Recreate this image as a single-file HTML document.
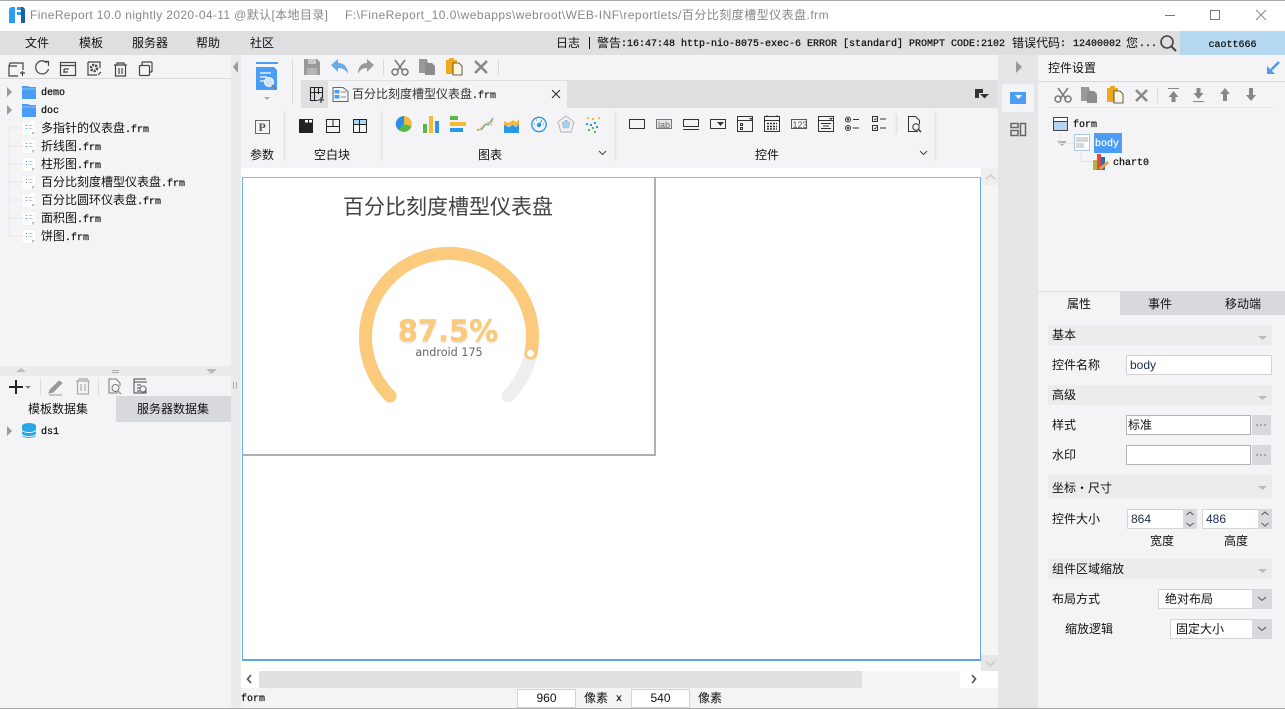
<!DOCTYPE html>
<html lang="zh"><head><meta charset="utf-8"><title>FineReport</title>
<style>
html,body{margin:0;padding:0;width:1285px;height:709px;overflow:hidden;background:#f4f4f7}
body{position:relative;font:12px/16px "Liberation Sans","Noto Sans CJK SC",sans-serif;color:#111}
.b{position:absolute}
.t{position:absolute;white-space:nowrap;line-height:16px;font-size:12px}
.m{font-family:"Liberation Mono","Noto Sans CJK SC",monospace;font-size:10px;-webkit-text-stroke:.25px #111}
.sec{position:absolute;left:1048px;width:224px;background:#ececed}
.in{position:absolute;background:#fff;border:1px solid #d4d4d6;box-sizing:border-box}
.in2{position:absolute;background:#fff;border:1px solid #b4b4b4;box-sizing:border-box}
.btn{position:absolute;background:#d8d9dc}
svg{position:absolute;left:0;top:0}
</style></head><body>
<!-- regions -->
<div class="b" style="left:0;top:0;width:1285px;height:31px;background:#fff"></div>
<div class="b" style="left:0;top:31px;width:1285px;height:24px;background:#dfdfe1"></div>
<div class="b" style="left:1180px;top:31px;width:105px;height:24px;background:#b5d9f0"></div>
<div class="b" style="left:0;top:55px;width:231px;height:654px;background:#f4f4f7"></div>
<div class="b" style="left:231px;top:55px;width:10px;height:654px;background:#ebebed"></div>
<div class="b" style="left:0;top:78px;width:231px;height:1px;background:#d8d8da"></div>
<div class="b" style="left:0;top:366px;width:231px;height:10px;background:#ebebed"></div>
<div class="b" style="left:116px;top:396px;width:115px;height:26px;background:#d8d9dc"></div>
<div class="b" style="left:241px;top:55px;width:757px;height:113px;background:#f4f4f7"></div>
<div class="b" style="left:301px;top:80px;width:697px;height:28px;background:#dfdfe1"></div>
<div class="b" style="left:328px;top:81px;width:239px;height:27px;background:#f4f4f7"></div>
<div class="b" style="left:241px;top:168px;width:757px;height:520px;background:#fff"></div>
<div class="b" style="left:981px;top:168px;width:17px;height:503px;background:#f5f5f3"></div>
<div class="b" style="left:981px;top:168px;width:17px;height:17px;background:#eeeeee"></div>
<div class="b" style="left:981px;top:655px;width:17px;height:16px;background:#e6e6e6"></div>
<div class="b" style="left:259px;top:671px;width:603px;height:17px;background:#e0e0e0"></div>
<div class="b" style="left:862px;top:671px;width:98px;height:17px;background:#f5f5f3"></div>
<div class="b" style="left:241px;top:688px;width:757px;height:21px;background:#f4f4f7"></div>
<div class="b" style="left:998px;top:55px;width:40px;height:654px;background:#e6e6e8"></div>
<div class="b" style="left:1002px;top:84px;width:32px;height:28px;background:#f4f4f7"></div>
<div class="b" style="left:1010px;top:92px;width:16px;height:12px;background:#4a9cf5"></div>
<div class="b" style="left:1038px;top:55px;width:247px;height:654px;background:#f4f4f7"></div>
<div class="b" style="left:1038px;top:81px;width:247px;height:1px;background:#d8d8da"></div>
<div class="b" style="left:1048px;top:107px;width:226px;height:1px;background:#e4e4e6"></div>
<div class="b" style="left:1120px;top:291px;width:165px;height:24px;background:#d8d9dc"></div>
<div class="b" style="left:1038px;top:291px;width:82px;height:1px;background:#e0e0e2"></div>
<!-- canvas -->
<div class="b" style="left:242px;top:177px;width:414px;height:279px;box-sizing:border-box;border-right:2px solid #b0b0b0;border-bottom:2px solid #b0b0b0"></div>
<div class="b" style="left:242px;top:177px;width:739px;height:484px;box-sizing:border-box;border-left:1.500px solid #6aa8ec;border-right:1px solid #6aa8ec;border-bottom:2px solid #5aa2f0;border-top:1.500px solid #8dbbe8"></div>
<div class="t" style="left:343px;top:196px;font-size:21px;line-height:24px;color:#444">百分比刻度槽型仪表盘</div>
<div class="t" style="left:348px;width:200px;text-align:center;top:313px;font:bold 29px/36px 'DejaVu Sans',sans-serif;color:#fbca7d;-webkit-text-stroke:.4px #fbca7d;text-shadow:0 2px 1px #e8e8e8">87.5%</div>
<div class="t" style="left:349px;width:200px;text-align:center;top:345px;font:11.200px/16px 'DejaVu Sans',sans-serif;color:#666">android 175</div>
<!-- sections -->
<div class="sec" style="top:325px;height:20px"></div>
<div class="sec" style="top:385px;height:20px"></div>
<div class="sec" style="top:475px;height:23px"></div>
<div class="sec" style="top:559px;height:20px"></div>
<div class="in" style="left:1126px;top:355px;width:146px;height:20px"></div>
<div class="in2" style="left:1126px;top:415px;width:125px;height:20px"></div>
<div class="btn" style="left:1252px;top:415px;width:19px;height:20px"></div>
<div class="in2" style="left:1126px;top:445px;width:125px;height:20px"></div>
<div class="btn" style="left:1252px;top:445px;width:19px;height:20px"></div>
<div class="in" style="left:1127px;top:509px;width:70px;height:20px"></div>
<div class="btn" style="left:1183px;top:509px;width:14px;height:20px"></div>
<div class="in" style="left:1202px;top:509px;width:70px;height:20px"></div>
<div class="btn" style="left:1258px;top:509px;width:14px;height:20px"></div>
<div class="in" style="left:1158px;top:589px;width:114px;height:20px"></div>
<div class="btn" style="left:1252px;top:589px;width:20px;height:20px"></div>
<div class="in" style="left:1170px;top:619px;width:102px;height:20px"></div>
<div class="btn" style="left:1252px;top:619px;width:20px;height:20px"></div>
<div class="in" style="left:517px;top:689px;width:59px;height:19px"></div>
<div class="in" style="left:631px;top:689px;width:59px;height:19px"></div>
<div class="b" style="left:1094px;top:133px;width:28px;height:20px;background:#4a9cf5"></div>

<svg width="1285" height="709" viewBox="0 0 1285 709" fill="none">
<!-- window border -->
<path d="M0 .5H1285" stroke="#aaa"/><path d="M0 708.5H1285" stroke="#aaa"/>
<!-- logo -->
<path d="M9 10a3 3 0 0 1 3-3h3v16H9z" fill="#2b9cf2"/><path d="M17 7h4v3h-4zM17 12h4v3h-4z" fill="#2b9cf2"/><path d="M21 7h1a3 3 0 0 1 3 3v13h-4z" fill="#1d5f9f"/><path d="M17 12h4v3h-4z" fill="#2b9cf2"/>
<!-- window buttons -->
<path d="M1165 15.500h10" stroke="#777"/><rect x="1210.500" y="10.500" width="9" height="9" stroke="#777"/><path d="M1256 10l10 10M1266 10l-10 10" stroke="#888"/>
<!-- search -->
<circle cx="1167" cy="42" r="6" stroke="#444" stroke-width="1.600"/><path d="M1171.500 46.500l4.500 4.500" stroke="#444" stroke-width="2"/>
<!-- left toolbar -->
<g stroke="#444" stroke-width="1.200">
<path d="M17 63h-7l-1 3v10h9M15 63h8v7M9 66h8"/><path d="M20 73h5M22.500 71v5"/>
<path d="M47 63a6.500 6.500 0 1 0 1.500 6"/><path d="M43.500 61.500h5v4.500" />
<rect x="60.500" y="62.500" width="15" height="13"/><path d="M60 65.500h15M64 69h5M64 72h4M64 69v4"/>
<path d="M88 62h12v6M88 62v13h9"/><circle cx="94" cy="68" r="3" stroke-width="2.500" stroke-dasharray="2 1"/><path d="M98 75l3-3"/>
<path d="M114 65h13M117 65v-2h7v2M115.500 65v11h10V65M119 68v6M122 68v6"/>
<rect x="139.500" y="65.500" width="10" height="10" rx="1"/><path d="M142 65v-2a1 1 0 0 1 1-1h8a1 1 0 0 1 1 1v8a1 1 0 0 1-1 1h-2"/>
</g>
<!-- tree -->
<path d="M7 87l5 5-5 5zM7 105l5 5-5 5zM7 426l5 5-5 5z" fill="#9a9a9a"/>
<path d="M1057 141h10l-5 5z" fill="#aaa"/>
<g fill="#4a9cf5"><path d="M22 86h6l2 1h6v12H22z"/><path d="M22 104h6l2 1h6v12H22z"/></g>
<path d="M22 89h14M22 107h14" stroke="#8fc3fa" stroke-width="1"/>
<path d="M8 128h15M8 146h15M8 164h15M8 182h15M8 200h15M8 218h15M8 236h15M9 125v111" stroke="#e8e8ea"/>
<defs><g id="f"><path d="M0 0h12v10l-3 3H0z" fill="#fff"/><path d="M9 13l3-3H9z" fill="#bbb"/><path d="M3 3h1v1H3zM3 6h1v1H3z" fill="#2b8fe6"/><path d="M5.500 3.500h4M5.500 6.500h4" stroke="#bbb" stroke-width=".8"/></g></defs>
<use href="#f" x="23" y="122"/><use href="#f" x="23" y="140"/><use href="#f" x="23" y="158"/><use href="#f" x="23" y="176"/><use href="#f" x="23" y="194"/><use href="#f" x="23" y="212"/><use href="#f" x="23" y="230"/>
<!-- splitter -->
<path d="M16 372h10l-5-4zM206 369h11l-5.500 5z" fill="#bbb"/><path d="M112 370.500h7M112 372.500h7" stroke="#aaa"/>
<path d="M233.500 382v7M236.500 382v7" stroke="#aaa"/>
<path d="M238 61v12l-5-6z" fill="#999"/>
<path d="M1016 61v12l6-6z" fill="#999"/>
<!-- left lower toolbar -->
<path d="M9 387h14M16 380v14" stroke="#222" stroke-width="2"/><path d="M25 386h6l-3 3z" fill="#888"/>
<path d="M40.500 378v18M98.500 378v18" stroke="#ddd"/>
<path d="M50 390l9-9 3 2-9 9-4 1zM49 395h13" fill="#999" stroke="#999"/>
<path d="M76 381h14M79 381v-2h8v2M77.500 381v13h11v-13M81 384v7M85 384v7" stroke="#aaa" stroke-width="1.200"/>
<path d="M118 393h-9v-14h7l4 4v3" stroke="#777"/><circle cx="115.500" cy="388" r="3.500" stroke="#777"/><path d="M118 391l3 3" stroke="#777"/>
<path d="M146 379h-12v14h12v-5M134 382h13M137 385h4M137 388h3M137 391h3" stroke="#444"/><circle cx="143" cy="389" r="3" stroke="#666"/>
<!-- db -->
<ellipse cx="29" cy="426" rx="7" ry="3" fill="#2aa5e6"/><path d="M22 426h14v9a7 3 0 0 1-14 0z" fill="#2aa5e6"/><path d="M22 430a7 2.500 0 0 0 14 0M22 434a7 2.500 0 0 0 14 0" stroke="#fff" stroke-width=".8"/>
<!-- report icon -->
<path d="M256 62h22v2h-22z" fill="#4a9cf5"/><path d="M256 67h18l3 3v20h-21z" fill="#4a9cf5"/><path d="M260 73h11M260 77h7M260 81h5" stroke="#fff" stroke-width="1.200"/><circle cx="269" cy="82" r="4.500" fill="#cfe3f7" stroke="#fff"/><path d="M272 85l4 4" stroke="#777" stroke-width="1.500"/>
<path d="M264 97h6l-3 3z" fill="#aaa"/>
<path d="M292.500 60v43M383.500 59v16M498.500 59v16" stroke="#d8d8da"/>
<!-- main toolbar -->
<path d="M304 59h13l3 3v13h-16z" fill="#999"/><rect x="308" y="59" width="8" height="5" fill="#c8c8c8"/><rect x="307" y="68" width="10" height="7" fill="#b4b4b4"/>
<path d="M331 65l7-6v4c6 0 10 4 10 11-2-4-5-6-10-6v4z" fill="#6aa9ea"/>
<path d="M374 65l-7-6v4c-6 0-9 4-9 11 2-4 4-6 9-6v4z" fill="#9a9a9a"/>
<g stroke="#777" stroke-width="1.500"><path d="M395 60l8 11M405 60l-8 11"/><circle cx="395" cy="72" r="3"/><circle cx="405" cy="72" r="3"/></g>
<path d="M419 59h8l1 4h-1v10h-8z" fill="#999"/><path d="M425 63h7l3 3v9h-10z" fill="#8c8c8c"/>
<path d="M446 60h11v9h-4v5h-7z" fill="#f0a81e"/><path d="M449 58h5v3h-5z" fill="#f0a81e"/><path d="M453 63h6l3 3v9h-9z" fill="#fff6dd" stroke="#333" stroke-width=".8"/>
<path d="M475 61l12 12M487 61l-12 12" stroke="#888" stroke-width="2.500"/>
<!-- tab icons -->
<path d="M310.500 87.500h12v11M310.500 87.500v13h7M310.500 92.500h12M314.500 88v12M318.500 88v6" stroke="#222" stroke-width="1.100"/><path d="M321 97v6M318 100h6" stroke="#222"/>
<path d="M333 87.500h10l5 4v10h-15z" fill="#f6f6f6" stroke="#666"/><rect x="334.500" y="90" width="5" height="3.500" fill="#4a9cf5"/><rect x="334.500" y="95" width="5" height="3.500" fill="#4a9cf5"/><path d="M341 92h5M341 97h5" stroke="#888"/>
<path d="M552 90l8 8M560 90l-8 8" stroke="#333" stroke-width="1.200"/>
<path d="M975 89h8v4h-4v5h-4z" fill="#333"/><path d="M980 94h9l-4.500 4.500z" fill="#333"/>
<!-- widget separators -->
<path d="M284.500 111v50M381.500 111v50M615.500 111v50M935.500 111v50" stroke="#e8e6df" stroke-width="2"/>
<path d="M896.500 114v20" stroke="#e8e6df" stroke-width="2"/>
<rect x="255.500" y="120.500" width="14" height="13" stroke="#666"/>
<path d="M299 119h14v14h-14z" fill="#222"/><rect x="305" y="120" width="3" height="2.500" fill="#fff"/><rect x="309" y="120" width="3" height="2.500" fill="#fff"/>
<path d="M326.500 119.500h13v13h-13zM326.500 126.500h13M333 119.500v7" stroke="#222"/>
<rect x="353" y="120" width="14" height="4" fill="#a9daf2"/><path d="M353.500 119.500h13v13h-13zM353.500 124.500h13M359.500 119.500v13" stroke="#222"/>
<!-- chart icons -->
<path d="M404 124v-8a8 8 0 0 1 7.500 10z" fill="#f5b83d"/><path d="M404 124l7.500 2a8 8 0 0 1-13 4z" fill="#58b947"/><path d="M404 124l-5.500 6a8 8 0 0 1 5.500-14z" fill="#2b8fe6"/>
<rect x="423" y="124" width="4" height="9" fill="#58b947"/><rect x="429" y="116" width="4" height="17" fill="#f5b83d"/><rect x="435" y="121" width="4" height="12" fill="#2b98e6"/>
<rect x="450" y="116" width="8" height="4" fill="#58b947"/><rect x="450" y="122" width="16" height="4" fill="#f5b83d"/><rect x="450" y="128" width="13" height="4" fill="#2b98e6"/>
<path d="M477 130l5-1 4-5 2 1 5-7" stroke="#2b98e6"/><path d="M478 131l6-6 4-3 3 3 2-6" stroke="#f5b83d"/>
<path d="M504 121l5 2 4-3 3 2 3-3v7h-15z" fill="#f5b83d"/><path d="M504 125l5 2 4-2 3 2 3-3v9h-15z" fill="#2b98e6"/>
<circle cx="539" cy="124.500" r="7.200" stroke="#2b98e6" stroke-width="1.400"/><circle cx="539" cy="125" r="2.200" fill="#2b98e6"/><path d="M539 125l3-5" stroke="#2b98e6"/><path d="M534 124h1M543 124h1M536 120h1" stroke="#2b98e6"/>
<path d="M566 116l8 6-3 10h-10l-3-10z" stroke="#c4c4c4" stroke-width="1.400"/><path d="M566 120l4 3-1.500 5h-5l-1.500-5z" fill="#9fd6ee" stroke="#aaa" stroke-width=".6"/>
<g fill="#2b98e6"><rect x="586" y="123" width="2" height="2"/><rect x="590" y="124" width="2" height="2"/><rect x="596" y="126" width="2" height="2"/><rect x="594" y="122" width="2" height="2"/></g><g fill="#f5b83d"><rect x="587" y="117" width="2" height="2"/><rect x="592" y="118" width="2" height="2"/><rect x="598" y="117" width="2" height="2"/></g><g fill="#58b947"><rect x="588" y="129" width="2" height="2"/><rect x="592" y="127" width="2" height="2"/><rect x="594" y="131" width="2" height="2"/></g>
<path d="M599 151l3.500 3.500 3.500-3.500M920 151l3.500 3.500 3.500-3.500" stroke="#444"/>
<!-- control icons -->
<g stroke="#333" stroke-width="1">
<rect x="629.500" y="119.500" width="15" height="9"/>
<rect x="656.500" y="119.500" width="15" height="9" stroke="#777" fill="#e6e6e6"/>
<rect x="683.500" y="119.500" width="15" height="7"/><path d="M683 129.500h16"/>
<rect x="710.500" y="119.500" width="15" height="9"/>
<rect x="737.500" y="116.500" width="15" height="15"/><path d="M737 120.500h16M740.500 123.500h2v2h-2zM740.500 127.500h2v2h-2z"/>
<rect x="764.500" y="116.500" width="15" height="15"/><path d="M764 120.500h16M767 117v-2M777 117v-2"/><path d="M767 123.500h10M767 126.500h10M767 129h10" stroke-dasharray="2 1" stroke-width="1.500"/>
<rect x="791.500" y="119.500" width="15" height="9" stroke="#555"/>
<rect x="818.500" y="116.500" width="15" height="15"/><path d="M818 120.500h16M821 123.500h10M823 126h6M821 128.500h10"/>
<circle cx="848" cy="119.500" r="2.500"/><circle cx="848" cy="128" r="2.500"/><path d="M853 119.500h6M853 128h6"/>
<rect x="872.500" y="116.500" width="5" height="5"/><rect x="872.500" y="125.500" width="5" height="5"/><path d="M880 119h6M880 128h6"/>
<path d="M918 131.500h-9.500v-15h7l4 4v4"/><circle cx="916" cy="127" r="3.200"/><path d="M918.500 129.500l2.500 2.500" stroke-width="1.500"/>
</g>
<path d="M721 122h7l-3.500 4z" transform="translate(-4 0)" fill="#333"/>
<path d="M749 118h4l-2 2z" fill="#333"/><path d="M829 118h4l-2 2z" fill="#333"/>
<circle cx="848" cy="119.500" r="1.200" fill="#333"/><circle cx="848" cy="128" r="1.200" fill="#333"/>
<path d="M874 119l1 1 1.500-2M874 128l1 1 1.500-2" stroke="#333" stroke-width=".8"/>
<!-- right strip -->
<path d="M1015 95h7l-3.500 4z" fill="#fff"/>
<path d="M1011 123.500h7v4h-7zM1011 130.500h7v5h-7zM1020.500 123.500h5v12h-5z" stroke="#666" stroke-width="1.500"/>
<!-- blue arrow -->
<path d="M1279 62l-8 8" stroke="#4a9cf5" stroke-width="2.500"/><path d="M1267 66l8 8h-8z" fill="#4a9cf5"/>
<!-- right toolbar -->
<g stroke="#777" stroke-width="1.500"><path d="M1058 88l8 11M1068 88l-8 11"/><circle cx="1058" cy="99" r="3"/><circle cx="1068" cy="99" r="3"/></g>
<path d="M1081 87h8l1 4h-1v10h-8z" fill="#999"/><path d="M1087 91h7l3 3v9h-10z" fill="#8c8c8c"/>
<path d="M1107 88h11v9h-4v5h-7z" fill="#f0a81e"/><path d="M1110 86h5v3h-5z" fill="#f0a81e"/><path d="M1114 91h6l3 3v9h-9z" fill="#fff6dd" stroke="#333" stroke-width=".8"/>
<path d="M1136 90l11 11M1147 90l-11 11" stroke="#888" stroke-width="2.500"/>
<path d="M1157.500 88v15" stroke="#ddd"/>
<g fill="#888"><path d="M1168 88h11v1h-11zM1173.500 91l5 6h-3v5h-4v-5h-3z"/><path d="M1193 101h11v1h-11zM1196.500 88h4v5h3l-5 6-5-6h3z"/><path d="M1225 88l5 6h-3v7h-4v-7h-3z"/><path d="M1249 88h4v7h3l-5 6-5-6h3z"/></g>
<!-- form tree icons -->
<rect x="1053.500" y="117.500" width="14" height="13" fill="#b7d3f0" stroke="#444"/><path d="M1054 121.500h13" stroke="#444"/><rect x="1054" y="118" width="13" height="3" fill="#fff"/>
<path d="M1060 133v10M1060 143.500h14M1081 152v9M1081 161.500h12" stroke="#e4e4e6"/>
<rect x="1074.500" y="134.500" width="15" height="16" fill="#fff" stroke="#a9c6df"/><rect x="1076" y="137" width="12" height="5" fill="#d8d8d8"/><rect x="1076" y="143" width="8" height="5" fill="#d8d8d8"/>
<rect x="1093" y="160" width="4" height="10" fill="#a8b93c"/><rect x="1097" y="154" width="4" height="16" fill="#e64545"/><rect x="1101" y="157" width="4" height="13" fill="#1f74b8"/><path d="M1099 168l8-7 2 2-8 7z" fill="#f0a040"/>
<!-- section triangles -->
<path d="M1258 336h9l-4.500 4zM1258 396h9l-4.500 4zM1258 486h9l-4.500 4zM1258 569h9l-4.500 4z" fill="#bbb"/>
<path d="M1256 425h2M1260 425h2M1264 425h2M1256 455h2M1260 455h2M1264 455h2" stroke="#777"/>
<path d="M1186.500 515l3.500-3 3.500 3M1186.500 523l3.500 3 3.500-3M1261.500 515l3.500-3 3.500 3M1261.500 523l3.500 3 3.500-3M1258 597l4 3.500 4-3.500M1258 627l4 3.500 4-3.500" stroke="#555"/>
<!-- scroll arrows -->
<path d="M986 179l4.500-4 4.500 4M986 661l4.500 5 4.500-5" stroke="#ccc" stroke-width="1.500"/>
<path d="M251 675l-3.500 4 3.500 4M972 675l3.500 4-3.500 4" stroke="#555" stroke-width="1.700"/>
<!-- gauge -->
<path d="M390 396A83.500 83.500 0 1 1 508 396" stroke="#eeeeee" stroke-width="13" stroke-linecap="round"/>
<path d="M390 396A83.500 83.500 0 1 1 530.900 353.300" stroke="#fbca7d" stroke-width="13" stroke-linecap="round"/>
<circle cx="530.500" cy="353.300" r="4.500" fill="#fff" stroke="#fbca7d" stroke-width="2"/>
</svg>

<svg width="1285" height="709" viewBox="0 0 1285 709"><text x="258.500" y="131" font-family="Liberation Serif" font-weight="bold" font-size="12" fill="#555">P</text><text x="658" y="128" font-family="Liberation Sans" font-size="9" fill="#666">lab</text><text x="792.500" y="128" font-family="Liberation Sans" font-size="9" fill="#555">123</text></svg>

<!-- text -->
<div class="t" style="left:30px;top:7px;color:#888;letter-spacing:.37px">FineReport 10.0 nightly 2020-04-11 @默认[本地目录]</div>
<div class="t" style="left:345px;top:7px;color:#888;letter-spacing:.47px">F:\FineReport_10.0\webapps\webroot\WEB-INF\reportlets/百分比刻度槽型仪表盘.frm</div>
<div class="t" style="left:25px;top:35px">文件</div>
<div class="t" style="left:79px;top:35px">模板</div>
<div class="t" style="left:132px;top:35px">服务器</div>
<div class="t" style="left:196px;top:35px">帮助</div>
<div class="t" style="left:250px;top:35px">社区</div>
<div class="t" style="left:556px;top:35px">日志</div>
<div class="b" style="left:589px;top:37px;width:1px;height:12px;background:#111"></div>
<div class="t" style="left:597px;top:35px">警告</div>
<div class="t m" style="left:621px;top:37px">:16:47:48 http-nio-8075-exec-6 ERROR [standard] PROMPT CODE:2102</div>
<div class="t" style="left:1012px;top:35px">错误代码</div>
<div class="t m" style="left:1060px;top:37px">:</div>
<div class="t m" style="left:1073px;top:37px">12400002</div>
<div class="t" style="left:1126px;top:35px">您</div>
<div class="t m" style="left:1139px;top:37px">...</div>
<div class="t m" style="left:1180px;width:105px;text-align:center;top:38px">caott666</div>

<div class="t m" style="left:41px;top:86px">demo</div>
<div class="t m" style="left:41px;top:104px">doc</div>
<div class="t" style="left:41px;top:120px">多指针的仪表盘<span class="m">.frm</span></div>
<div class="t" style="left:41px;top:138px">折线图<span class="m">.frm</span></div>
<div class="t" style="left:41px;top:156px">柱形图<span class="m">.frm</span></div>
<div class="t" style="left:41px;top:174px">百分比刻度槽型仪表盘<span class="m">.frm</span></div>
<div class="t" style="left:41px;top:192px">百分比圆环仪表盘<span class="m">.frm</span></div>
<div class="t" style="left:41px;top:210px">面积图<span class="m">.frm</span></div>
<div class="t" style="left:41px;top:228px">饼图<span class="m">.frm</span></div>
<div class="t" style="left:28px;top:401px">模板数据集</div>
<div class="t" style="left:137px;top:401px">服务器数据集</div>
<div class="t m" style="left:41px;top:425px">ds1</div>

<div class="t" style="left:352px;top:86px;color:#333">百分比刻度槽型仪表盘<span class="m">.frm</span></div>
<div class="t" style="left:250px;top:147px">参数</div>
<div class="t" style="left:314px;top:147px">空白块</div>
<div class="t" style="left:478px;top:147px">图表</div>
<div class="t" style="left:755px;top:147px">控件</div>

<div class="t" style="left:1048px;top:60px">控件设置</div>
<div class="t m" style="left:1073px;top:118px">form</div>
<div class="t m" style="left:1095px;top:137px;color:#fff;-webkit-text-stroke:.2px #fff">body</div>
<div class="t m" style="left:1113px;top:156px">chart0</div>

<div class="t" style="left:1067px;top:296px">属性</div>
<div class="t" style="left:1148px;top:296px">事件</div>
<div class="t" style="left:1225px;top:296px">移动端</div>
<div class="t" style="left:1052px;top:327px">基本</div>
<div class="t" style="left:1052px;top:357px">控件名称</div>
<div class="t" style="left:1130px;top:357px;color:#1a2a50">body</div>
<div class="t" style="left:1052px;top:387px">高级</div>
<div class="t" style="left:1052px;top:417px">样式</div>
<div class="t" style="left:1128px;top:417px">标准</div>
<div class="t" style="left:1052px;top:447px">水印</div>
<div class="t" style="left:1052px;top:480px">坐标・尺寸</div>
<div class="t" style="left:1052px;top:511px">控件大小</div>
<div class="t" style="left:1131px;top:511px;color:#1a2a50">864</div>
<div class="t" style="left:1206px;top:511px;color:#1a2a50">486</div>
<div class="t" style="left:1150px;top:533px">宽度</div>
<div class="t" style="left:1224px;top:533px">高度</div>
<div class="t" style="left:1052px;top:561px">组件区域缩放</div>
<div class="t" style="left:1052px;top:591px">布局方式</div>
<div class="t" style="left:1165px;top:591px">绝对布局</div>
<div class="t" style="left:1065px;top:621px">缩放逻辑</div>
<div class="t" style="left:1176px;top:621px">固定大小</div>

<div class="t m" style="left:241px;top:692px">form</div>
<div class="t" style="left:517px;width:59px;text-align:center;top:690px">960</div>
<div class="t" style="left:584px;top:690px">像素</div>
<div class="t m" style="left:616px;top:692px">x</div>
<div class="t" style="left:631px;width:59px;text-align:center;top:690px">540</div>
<div class="t" style="left:698px;top:690px">像素</div>
</body></html>
